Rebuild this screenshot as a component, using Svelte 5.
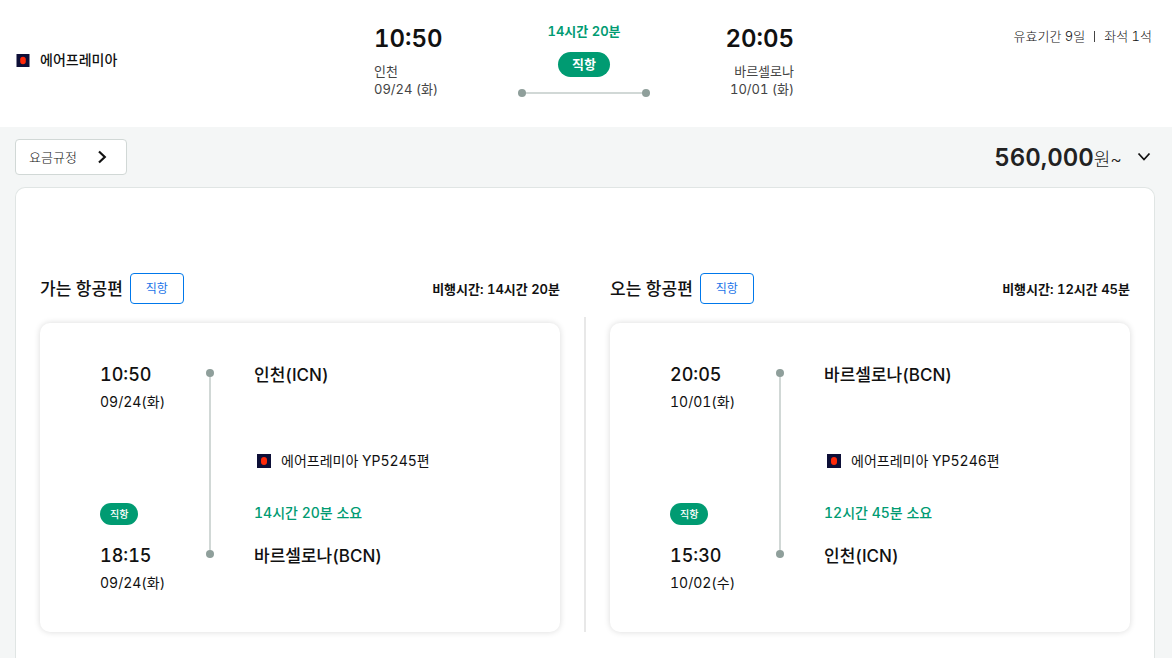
<script lang="ts">
	interface Stop {
		time: string;
		date: string;
		airport: string;
	}

	interface Leg {
		title: string;
		duration: string;
		flight: string;
		from: Stop;
		to: Stop;
	}

	const airline = '에어프레미아';

	const legs: Leg[] = [
		{
			title: '가는 항공편',
			duration: '14시간 20분',
			flight: 'YP5245편',
			from: { time: '10:50', date: '09/24(화)', airport: '인천(ICN)' },
			to: { time: '18:15', date: '09/24(화)', airport: '바르셀로나(BCN)' }
		},
		{
			title: '오는 항공편',
			duration: '12시간 45분',
			flight: 'YP5246편',
			from: { time: '20:05', date: '10/01(화)', airport: '바르셀로나(BCN)' },
			to: { time: '15:30', date: '10/02(수)', airport: '인천(ICN)' }
		}
	];

	let isOpen = $state(true);
</script>

{#snippet logo()}
	<svg class="logo" viewBox="0 0 14 14" aria-hidden="true">
		<rect width="14" height="14" fill="#0d0f37" />
		<rect x="4" y="3" width="6" height="8" rx="3" fill="#ff2a0a" />
	</svg>
{/snippet}

{#snippet stop(point: Stop)}
	<strong class="stop-time">{point.time}</strong>
	<span class="stop-date">{point.date}</span>
{/snippet}

<div class="page">
	<header class="summary">
		<div class="airline">{@render logo()}<strong>{airline}</strong></div>

		<div class="route">
			<div class="endpoint">
				<strong class="time">10:50</strong>
				<span>인천</span>
				<span>09/24 (화)</span>
			</div>
			<div class="via">
				<span class="via-duration">14시간 20분</span>
				<span class="pill">직항</span>
				<span class="track"></span>
			</div>
			<div class="endpoint arrival">
				<strong class="time">20:05</strong>
				<span>바르셀로나</span>
				<span>10/01 (화)</span>
			</div>
		</div>

		<p class="validity"><span>유효기간 9일</span><span class="bar"></span><span>좌석 1석</span></p>
	</header>

	<div class="fare">
		<button class="rules" type="button">
			요금규정
			<svg width="10" height="14" viewBox="0 0 10 14" aria-hidden="true">
				<path d="M2 1.5L7.8 7 2 12.5" fill="none" stroke="#111" stroke-width="2.2" />
			</svg>
		</button>

		<button class="price" type="button" aria-expanded={isOpen} onclick={() => (isOpen = !isOpen)}>
			<span class="amount"><strong>560,000</strong>원~</span>
			<svg width="14" height="10" viewBox="0 0 14 10" aria-hidden="true">
				<path d="M1.5 1.5L7 7.5l5.5-6" fill="none" stroke="#111" stroke-width="1.8" />
			</svg>
		</button>
	</div>

	{#if isOpen}
		<main class="panel">
			{#each legs as leg, i (leg.title)}
				{#if i > 0}
					<div class="divider"></div>
				{/if}
				<section class="leg">
					<div class="leg-head">
						<h2>{leg.title}</h2>
						<span class="tag">직항</span>
						<span class="leg-duration">비행시간: {leg.duration}</span>
					</div>

					<div class="card">
						<div class="times">
							{@render stop(leg.from)}
							<span class="pill small">직항</span>
							{@render stop(leg.to)}
						</div>
						<div class="track vertical"></div>
						<div class="places">
							<strong>{leg.from.airport}</strong>
							<span class="flight">{@render logo()}{airline} {leg.flight}</span>
							<span class="elapsed">{leg.duration} 소요</span>
							<strong>{leg.to.airport}</strong>
						</div>
					</div>
				</section>
			{/each}
		</main>
	{/if}
</div>

<style>
	:global(body) {
		background: #f4f6f6;
	}

	.page {
		display: flex;
		flex-direction: column;
		min-height: 100vh;
		color: #111;
		font-family: Inter, 'Noto Sans CJK KR', sans-serif;
		font-size: 14px;
		font-variant-numeric: tabular-nums;
		line-height: 18px;
	}

	strong {
		font-weight: 600;
	}

	button {
		font: inherit;
		font-variant-numeric: inherit;
		color: inherit;
		cursor: pointer;
	}

	.summary {
		display: grid;
		grid-template-columns: 1fr 420px 1fr;
		padding: 22px 20px 29px 16px;
		background: #fff;
	}

	.airline {
		display: flex;
		align-items: center;
		gap: 10px;
	}

	.airline strong {
		font-weight: 500;
	}

	.logo {
		flex: none;
		width: 14px;
		height: 14px;
	}

	.airline .logo {
		height: 13px;
	}

	.route {
		display: flex;
		justify-content: space-between;
	}

	.endpoint {
		display: flex;
		flex-direction: column;
		font-size: 13px;
		color: #444;
	}

	.arrival {
		align-items: flex-end;
	}

	.time {
		margin-bottom: 6px;
		font-size: 24px;
		line-height: 34px;
		color: #111;
	}

	.via {
		display: flex;
		flex-direction: column;
		align-items: center;
	}

	.via-duration {
		margin-bottom: 12px;
		font-size: 13px;
		font-weight: 600;
		color: #009b72;
	}

	.pill {
		padding: 0 14px;
		border-radius: 13px;
		background: #009b72;
		color: #fff;
		font-size: 13px;
		font-weight: 700;
		line-height: 25px;
	}

	.pill.small {
		align-self: flex-start;
		margin: auto 0 17px;
		padding: 0 10px;
		font-size: 10px;
		font-weight: 500;
		line-height: 22px;
	}

	.track {
		display: flex;
		align-items: center;
		justify-content: space-between;
		width: 132px;
		height: 8px;
		margin-top: 12px;
		background: linear-gradient(#d1d8d6, #d1d8d6) center / 100% 2px no-repeat;
	}

	.track::before,
	.track::after {
		content: '';
		width: 8px;
		height: 8px;
		border-radius: 50%;
		background: #8f9f9b;
	}

	.track.vertical {
		flex-direction: column;
		width: 8px;
		height: auto;
		margin: 8px 0 38px;
		background-size: 2px 100%;
	}

	.validity {
		display: flex;
		align-items: center;
		justify-content: flex-end;
		gap: 9px;
		height: 28px;
		margin: 0;
		font-size: 13px;
		font-weight: 300;
	}

	.bar {
		width: 1px;
		height: 11px;
		background: #444;
	}

	.fare {
		display: flex;
		align-items: center;
		justify-content: space-between;
		height: 60px;
		padding: 0 21px 0 15px;
	}

	.rules {
		display: flex;
		align-items: center;
		gap: 20px;
		height: 36px;
		padding: 0 19px 0 13px;
		border: 1px solid #d1d8d6;
		border-radius: 4px;
		background: #fff;
		font-size: 13px;
		font-weight: 300;
	}

	.price {
		display: flex;
		align-items: center;
		gap: 15px;
		padding: 0;
		border: 0;
		background: none;
		color: #222;
		font-size: 18px;
		font-weight: 300;
		line-height: 36px;
	}

	.amount {
		padding-top: 4px;
	}

	.price strong {
		font-size: 24px;
	}

	.panel {
		display: grid;
		grid-template-columns: 1fr 2px 1fr;
		flex: 1;
		align-content: start;
		gap: 24px;
		margin: 0 17px 0 15px;
		padding: 85px 24px 0;
		border: 1px solid #e0e5e4;
		border-bottom: 0;
		border-radius: 10px 10px 0 0;
		background: #fff;
	}

	.divider {
		margin-top: 44px;
		background: #e8e8e8;
	}

	.leg-head {
		display: flex;
		align-items: center;
		gap: 7px;
		margin-bottom: 19px;
	}

	h2 {
		margin: 0;
		font-size: 17px;
		font-weight: 500;
	}

	.tag {
		padding: 0 15px;
		border: 1px solid #0078eb;
		border-radius: 4px;
		color: #1a73e8;
		font-size: 12px;
		line-height: 29px;
	}

	.leg-duration {
		margin-left: auto;
		font-size: 13px;
		font-weight: 600;
	}

	.card {
		display: grid;
		grid-template-columns: 106px 8px 1fr;
		padding: 38px 24px 36px 60px;
		border-radius: 10px;
		box-shadow: 0 0 6px rgba(0, 0, 0, 0.15);
		line-height: 26px;
	}

	.times,
	.places {
		display: flex;
		flex-direction: column;
	}

	.times {
		min-height: 235px;
	}

	.places {
		padding-left: 40px;
	}

	.stop-time,
	.places strong {
		font-size: 17px;
		font-weight: 500;
		line-height: 28px;
	}

	.stop-time {
		font-size: 18px;
	}

	.flight {
		display: flex;
		align-items: center;
		gap: 10px;
		margin: 59px 0 26px;
		padding-left: 3px;
	}

	.elapsed {
		margin-bottom: 16px;
		color: #009b72;
		font-weight: 500;
	}
</style>
